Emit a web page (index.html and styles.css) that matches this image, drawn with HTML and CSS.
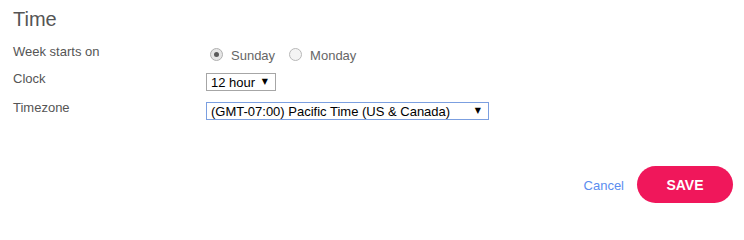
FILE: index.html
```html
<!DOCTYPE html>
<html>
<head>
<meta charset="utf-8">
<link rel="stylesheet" href="styles.css">
</head>
<body>
<div class="page">
  <h1 class="title">Time</h1>
  <div class="form">
    <div class="label">Week starts on</div>
    <div class="control radios">
      <label class="radio-opt"><span class="radio checked"><span class="dot"></span></span><span class="radio-text">Sunday</span></label>
      <label class="radio-opt"><span class="radio"></span><span class="radio-text">Monday</span></label>
    </div>
    <div class="label">Clock</div>
    <div class="control">
      <div class="select select-clock"><span class="select-text">12 hour</span><span class="arrow">▼</span></div>
    </div>
    <div class="label">Timezone</div>
    <div class="control">
      <div class="select select-tz focused"><span class="select-text">(GMT-07:00) Pacific Time (US &amp; Canada)</span><span class="arrow">▼</span></div>
    </div>
  </div>
  <div class="footer">
    <a class="cancel" href="#">Cancel</a>
    <button class="save" type="button">SAVE</button>
  </div>
</div>
</body>
</html>
```
FILE: styles.css
```css
html, body {
  margin: 0;
  padding: 0;
  background: #ffffff;
}
body {
  font-family: "Liberation Sans", Arial, sans-serif;
  color: #555555;
}
.page {
  padding: 8px 11px 0 13px;
}
.title {
  margin: 0;
  font-size: 20px;
  line-height: 23px;
  font-weight: normal;
  color: #555555;
}
.form {
  margin-top: 13px;
  display: grid;
  grid-template-columns: 193px 1fr;
  grid-template-rows: 27px 29px 20px;
  align-items: start;
}
.label {
  font-size: 13px;
  line-height: 15px;
  color: #555555;
}
.control {
  margin-top: 2px;
}
.radios {
  display: flex;
  align-items: center;
  height: 17px;
}
.radio-opt {
  display: flex;
  align-items: center;
  margin-left: 4px;
  margin-right: 10px;
}
.radio {
  box-sizing: border-box;
  width: 13px;
  height: 13px;
  border-radius: 50%;
  border: 1px solid #b8b8b8;
  background: #f4f4f4;
  display: flex;
  align-items: center;
  justify-content: center;
}
.radio.checked {
  background: #e6e6e6;
  border-color: #b0b0b0;
}
.dot {
  width: 5px;
  height: 5px;
  border-radius: 50%;
  background: #5a5a5a;
}
.radio-text {
  margin-left: 8px;
  font-size: 13px;
  line-height: 15px;
  color: #666666;
  padding-top: 2px;
}
.select {
  box-sizing: border-box;
  height: 18px;
  border: 1px solid #a6a6a6;
  display: flex;
  align-items: center;
  justify-content: space-between;
  padding: 0 7px 0 4px;
  font-size: 13px;
  color: #000000;
  background: #ffffff;
}
.select-clock {
  width: 70px;
}
.select-tz {
  width: 283px;
}
.select.focused {
  border-color: #7b9fe0;
}
.select-text {
  line-height: 15px;
  padding-top: 1px;
}
.arrow {
  font-family: "DejaVu Sans", sans-serif;
  font-size: 8px;
  line-height: 8px;
  color: #000000;
}
.footer {
  margin-top: 46px;
  display: flex;
  justify-content: flex-end;
  align-items: center;
  gap: 13px;
}
.cancel {
  font-size: 13px;
  color: #5b8def;
  text-decoration: none;
  padding-top: 2px;
}
.save {
  width: 96px;
  height: 37px;
  border: none;
  border-radius: 19px;
  background: #f0175b;
  color: #ffffff;
  font-family: "Liberation Sans", Arial, sans-serif;
  font-weight: bold;
  font-size: 14px;
  padding: 0;
}
```
